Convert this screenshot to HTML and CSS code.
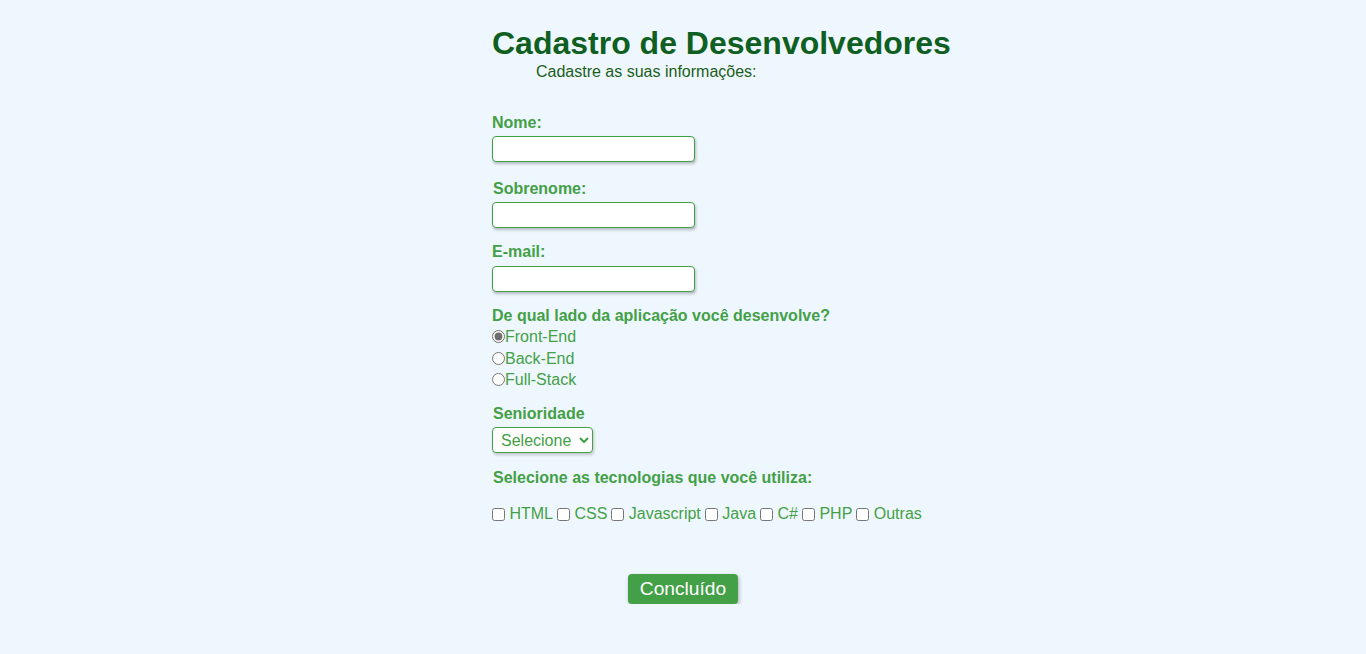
FILE: index.html
```html
<!DOCTYPE html>
<html lang="pt-BR">
<head>
<meta charset="utf-8">
<title>Cadastro de Desenvolvedores</title>
<link rel="stylesheet" href="styles.css">
</head>
<body>
<main class="page">
  <header class="head">
    <h1 class="title">Cadastro de Desenvolvedores</h1>
    <p class="subtitle">Cadastre as suas informações:</p>
  </header>
  <form class="form">
    <div class="field field-nome">
      <label class="label label-tight" for="nome">Nome:</label>
      <input class="text-input" id="nome" type="text">
    </div>
    <div class="field field-sobrenome">
      <label class="label label-shift label-tight" for="sobrenome">Sobrenome:</label>
      <input class="text-input" id="sobrenome" type="text">
    </div>
    <div class="field field-email">
      <label class="label" for="email">E-mail:</label>
      <input class="text-input" id="email" type="email">
    </div>
    <div class="field field-lado">
      <span class="label label-flush">De qual lado da aplicação você desenvolve?</span>
      <label class="radio"><input type="radio" name="lado" checked>Front-End</label>
      <label class="radio"><input type="radio" name="lado">Back-End</label>
      <label class="radio"><input type="radio" name="lado">Full-Stack</label>
    </div>
    <div class="field field-senioridade">
      <label class="label label-shift label-tight" for="senioridade">Senioridade</label>
      <select class="select" id="senioridade">
        <option>Selecione</option>
        <option>Júnior</option>
        <option>Pleno</option>
        <option>Sênior</option>
      </select>
    </div>
    <div class="field field-tech">
      <span class="label label-shift">Selecione as tecnologias que você utiliza:</span>
      <div class="checks">
        <label class="check"><input type="checkbox"> HTML</label>
        <label class="check"><input type="checkbox"> CSS</label>
        <label class="check"><input type="checkbox"> Javascript</label>
        <label class="check"><input type="checkbox"> Java</label>
        <label class="check"><input type="checkbox"> C#</label>
        <label class="check"><input type="checkbox"> PHP</label>
        <label class="check"><input type="checkbox"> Outras</label>
      </div>
    </div>
    <div class="actions">
      <button class="button" type="button">Concluído</button>
    </div>
  </form>
</main>
</body>
</html>
```
FILE: styles.css
```css
html, body {
  margin: 0;
  padding: 0;
  background: #eff7fe;
}
body {
  font-family: "Liberation Sans", Arial, sans-serif;
  color: #43a047;
}
.page {
  width: 400px;
  margin: 0 auto;
  padding-top: 25px;
  padding-left: 18px;
}
.head {
  margin-bottom: 32px;
}
.title {
  margin: 0;
  font-size: 32px;
  font-weight: bold;
  color: #0f5f22;
  line-height: 37px;
  white-space: nowrap;
}
.subtitle {
  margin: 1px 0 0;
  padding-left: 44px;
  font-size: 16px;
  color: #1b5e20;
  line-height: 18px;
  white-space: nowrap;
}
.form {
  display: flex;
  flex-direction: column;
}
.field {
  display: flex;
  flex-direction: column;
  align-items: flex-start;
}
.field-nome { margin-bottom: 17px; }
.field-sobrenome { margin-bottom: 14px; }
.field-email { margin-bottom: 14px; }
.field-lado { margin-bottom: 13.5px; }
.field-senioridade { margin-bottom: 15px; }
.label {
  font-weight: bold;
  font-size: 16px;
  line-height: 20px;
  margin-bottom: 4px;
  white-space: nowrap;
}
.label-tight {
  margin-bottom: 3px;
}
.label-flush {
  margin-bottom: 0;
}
.label-shift {
  padding-left: 1px;
}
.text-input {
  box-sizing: border-box;
  width: 203px;
  height: 26px;
  border: 1px solid #43a047;
  border-radius: 4px;
  background: #fff;
  box-shadow: 1px 2px 3px rgba(0,0,0,0.25);
  margin: 0;
}
.radio {
  display: flex;
  align-items: center;
  font-size: 16px;
  line-height: 21.5px;
  height: 21.5px;
}
.radio input {
  margin: 0;
  width: 13px;
  height: 13px;
  accent-color: #6e6e6e;
}
.select {
  box-sizing: border-box;
  height: 26px;
  width: 101px;
  border: 1px solid #43a047;
  border-radius: 4px;
  background: #fff;
  color: #43a047;
  font-family: "Liberation Sans", Arial, sans-serif;
  font-size: 16px;
  padding: 0 4px;
  box-shadow: 1px 2px 3px rgba(0,0,0,0.2);
}
.checks {
  display: flex;
  align-items: center;
  margin-top: 13px;
  line-height: 18px;
}
.check {
  display: flex;
  align-items: center;
  font-size: 16px;
  white-space: pre;
  margin-right: 4px;
}
.check input {
  margin: 0;
  width: 13px;
  height: 13px;
  accent-color: #6e6e6e;
}
.actions {
  display: flex;
  margin-top: 51px;
  padding-left: 136px;
}
.button {
  background: #43a047;
  color: #fff;
  border: none;
  border-radius: 4px;
  font-family: "Liberation Sans", Arial, sans-serif;
  font-size: 19.2px;
  height: 30px;
  width: 110px;
  box-shadow: 1px 2px 4px rgba(0,0,0,0.3);
  cursor: pointer;
}
```
